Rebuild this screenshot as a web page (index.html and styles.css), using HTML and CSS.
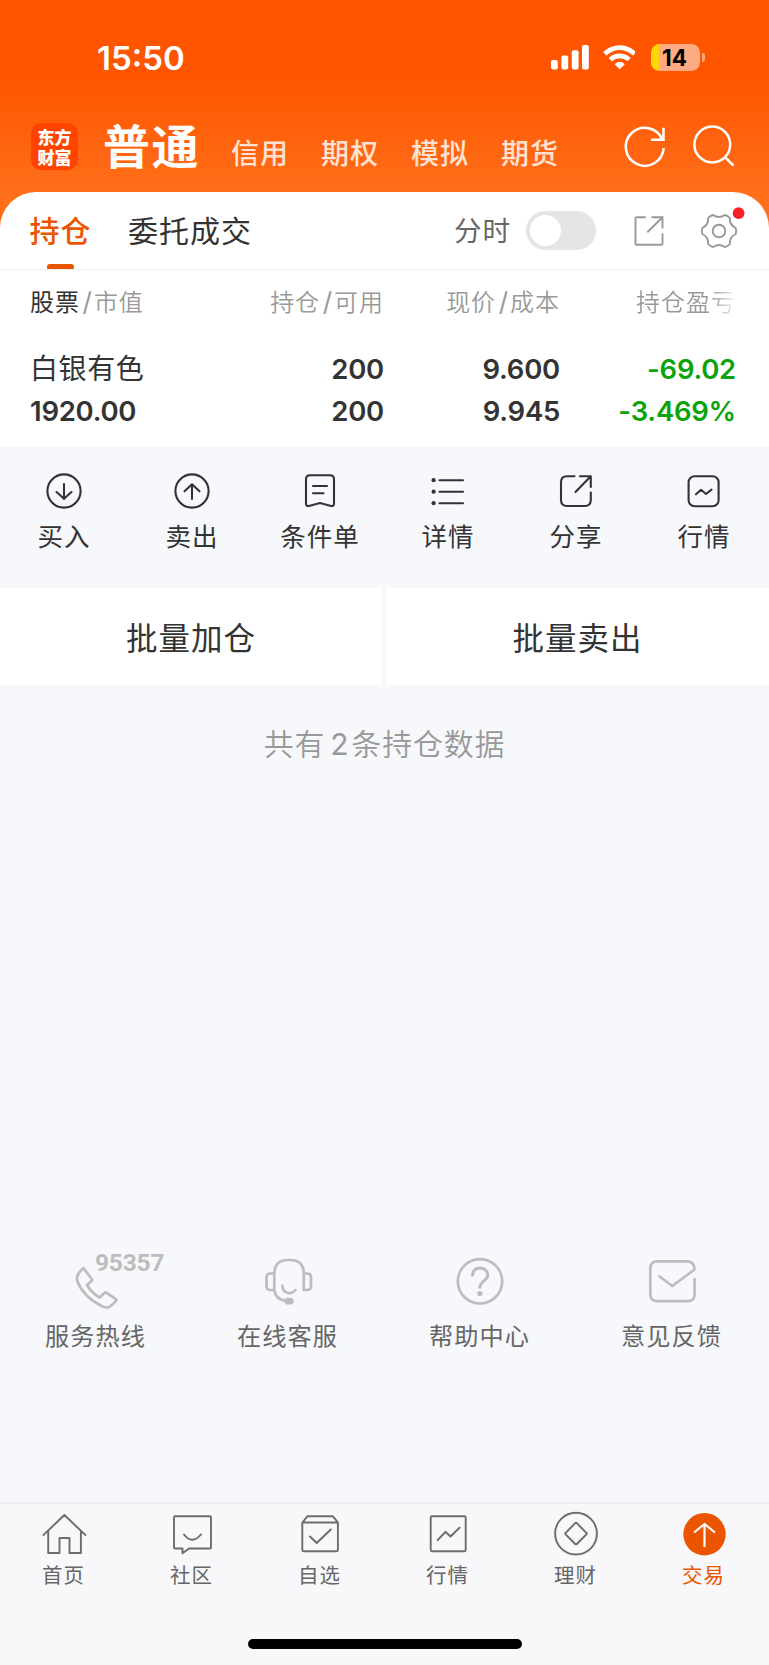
FILE: index.html
```html
<!DOCTYPE html>
<html lang="zh-CN">
<head>
<meta charset="utf-8">
<title>持仓</title>
<link rel="stylesheet" href="styles.css">
</head>
<body>
<div class="screen">
  <header class="top">
    <div class="status">
      <span class="clock">15:50</span>
      <svg class="signals" viewBox="545 40 90 34" width="90" height="34" fill="#fff">
        <rect x="551" y="60" width="6.8" height="9.4" rx="2"/><rect x="561.4" y="55.4" width="6.8" height="14" rx="2"/><rect x="571.8" y="50.3" width="6.8" height="19.1" rx="2"/><rect x="582" y="45" width="6.8" height="24.4" rx="2"/>
        <g fill="none" stroke="#fff" stroke-width="4.7"><path d="M604.8 53.8C613.3 45.5 626.100 45.500 634.600 53.800"/><path d="M610.300 59.600C615.700 54.500 623.700 54.500 629.100 59.600"/></g>
        <path d="M619.700 69.300L614.600 64.200Q619.700 59.400 624.800 64.200Z"/>
      </svg>
      <div class="battery"><span>14</span></div>
      <i class="nub"></i>
    </div>
    <div class="accounts">
      <div class="logo">东方<br>财富</div>
      <b class="current">普通</b>
      <nav class="others"><span>信用</span><span>期权</span><span>模拟</span><span>期货</span></nav>
      <svg class="top-icons" viewBox="620 122 120 50" width="120" height="50" fill="none" stroke="#fff" stroke-width="2.500">
        <path d="M663.700 148.200A19 19 0 1 1 662.300 139.500"/><path d="M663.500 127.800V139.700H651"/>
        <circle cx="712.300" cy="144.500" r="17.900"/><path d="M724.700 156.800L733.500 165.600"/>
      </svg>
    </div>
  </header>

  <main class="card">
    <div class="tabs">
      <span class="tab active">持仓</span>
      <span class="tab second">委托成交</span>
      <span class="mode">分时</span>
      <i class="toggle"></i>
      <svg class="tool-icons" viewBox="628 200 125 60" width="125" height="60" fill="none" stroke="#999" stroke-width="1.900">
        <path d="M645.700 217.300H636.500Q635.500 217.300 635.500 218.300V243.700Q635.500 244.700 636.500 244.700H661.500Q662.500 244.700 662.500 243.700V233.500"/><path d="M651.500 217.300H662.500V228.500M662 217.800L647.300 232.200"/>
        <g transform="translate(719 231)"><path stroke-linejoin="round" d="M16.700 3Q17.800 0 16.700 -3Q10.400 -6 10.900 -13Q8.900 -15.400 5.800 -16Q0 -12 -5.800 -16Q-8.900 -15.400 -10.900 -13Q-10.400 -6 -16.700 -3Q-17.800 0 -16.700 3Q-10.400 6 -10.900 13Q-8.900 15.400 -5.800 16Q0 12 5.800 16Q8.900 15.400 10.900 13Q10.400 6 16.700 3Z"/><circle r="6.300"/></g>
        <circle cx="738.600" cy="213.200" r="5.900" fill="#fa1f25" stroke="none"/>
      </svg>
    </div>
    <div class="grid heads">
      <span><em>股票</em><s>/</s>市值</span><span>持仓<s>/</s>可用</span><span>现价<s>/</s>成本</span><span class="fade">持仓盈亏</span>
    </div>
    <div class="grid row first"><span class="name">白银有色</span><span>200</span><span>9.600</span><span class="loss">-69.02</span></div>
    <div class="grid row"><span>1920.00</span><span>200</span><span>9.945</span><span class="loss">-3.469%</span></div>
  </main>

  <section class="actions">
    <div><svg viewBox="44 471 40 40"><circle cx="64" cy="491" r="16.600"/><path d="M64 484V499M56.500 492L64 498.700L71.500 492"/></svg><span>买入</span></div>
    <div><svg viewBox="172 471 40 40"><circle cx="192" cy="491" r="16.600"/><path d="M192 499V484.300M184.500 491.300L192 484.300L199.500 491.300"/></svg><span>卖出</span></div>
    <div><svg viewBox="300 471 40 40"><path d="M310 475.300H330Q334 475.300 334 479.300V503.500Q334 506.500 331 505.900L320 503L309 505.900Q306 506.500 306 503.500V479.300Q306 475.300 310 475.300ZM313 486H327M313 493.300H323.500"/></svg><span>条件单</span></div>
    <div><svg viewBox="428 471 40 40"><path d="M439.500 480.200H463M439.500 491.700H463M439.500 503.200H463"/><g fill="#333" stroke="none"><circle cx="433.600" cy="480.200" r="2.100"/><circle cx="433.600" cy="491.700" r="2.100"/><circle cx="433.600" cy="503.200" r="2.100"/></g></svg><span>详情</span></div>
    <div><svg viewBox="556 471 40 40"><path d="M574.500 476.300H567Q561 476.300 561 482.300V500Q561 506 567 506H584.800Q590.800 506 590.800 500V492.500M580 476.300H590.800V487M590.300 476.800L575.500 492"/></svg><span>分享</span></div>
    <div><svg viewBox="684 471 40 40"><rect x="688.600" y="476.200" width="30" height="30" rx="6"/><path d="M696 494.200L701 489.800L706 494L711.500 489.700"/></svg><span>行情</span></div>
  </section>

  <section class="batch"><div>批量加仓</div><div>批量卖出</div></section>
  <p class="count">共有<span>2</span>条持仓数据</p>

  <section class="services">
    <div><svg viewBox="66 1251 60 60"><path d="M83.500 1268L92 1279.500Q92.300 1280.200 91.700 1280.800L87 1285Q91 1292.500 99.700 1297.500L104.700 1292.800Q105.500 1292 106.400 1292.600L115.800 1299.200Q117 1300 115.800 1301.200Q111.500 1306 108.500 1307.300Q106 1308 102.500 1306.500Q83.500 1297 77.500 1281.500Q76.300 1278 77.800 1275Q80 1271 83.500 1268Z"/></svg><i class="hotline">95357</i><span>服务热线</span></div>
    <div><svg viewBox="258 1251 60 60"><path d="M274.300 1290V1274Q274.300 1260 288 1260H290Q303.800 1260 303.800 1274V1290H307Q311 1290 311 1286V1277.500Q311 1273.500 307 1273.500H304M274.300 1273.500H270.500Q266.500 1273.500 266.500 1277.500V1286Q266.500 1290 270.500 1290H274.300Q275.500 1299.500 286 1301M282.500 1285.500C282.500 1293.500 291 1295.500 295.500 1290"/><rect x="285.800" y="1299" width="6.500" height="4.200" rx="2" fill="#bdbdbd"/></svg><span>在线客服</span></div>
    <div><svg viewBox="450 1251 60 60"><circle cx="480" cy="1281.300" r="22.200"/><path stroke-width="3" stroke-linecap="butt" d="M472.500 1276.500C472.500 1270.500 475.500 1268 480 1268S487.700 1271 487.700 1275C487.700 1281 479.700 1281 479.700 1288.500"/><circle cx="479.900" cy="1293.500" r="2.600" fill="#bdbdbd" stroke="none"/></svg><span>帮助中心</span></div>
    <div><svg viewBox="642 1251 60 60"><path d="M694.600 1279V1294Q694.600 1301.200 687.500 1301.200H657.500Q650.300 1301.200 650.300 1294V1268.500Q650.300 1261.300 657.500 1261.300H687Q694.600 1261.300 694.600 1269.500L672.300 1286L659.500 1276.500"/></svg><span>意见反馈</span></div>
  </section>

  <footer class="bottom">
    <nav class="bar">
      <div><svg viewBox="40 1509 48 48"><path stroke-linecap="butt" d="M42.800 1535.600L64.400 1515L86 1535.600M48.200 1531V1553H59.500V1538H69.500V1553H80.900V1531"/></svg><span>首页</span></div>
      <div><svg viewBox="168 1509 48 48"><path d="M175 1516.300H210Q211 1516.300 211 1517.300V1547.500Q211 1548.500 210 1548.500H189L182.500 1553.300V1548.500H175Q174 1548.500 174 1547.500V1517.300Q174 1516.300 175 1516.300ZM184 1534.500Q192 1545 201 1534.500"/></svg><span>社区</span></div>
      <div><svg viewBox="296 1509 48 48"><path d="M302.500 1522.500L307.300 1516.300H333L337.900 1522.500M302.300 1522.500H337.900V1549.500Q337.900 1551.300 336.100 1551.300H304.100Q302.300 1551.300 302.300 1549.500ZM310 1536.500L316.700 1543L330.800 1529.500"/></svg><span>自选</span></div>
      <div><svg viewBox="424 1509 48 48"><rect x="430.700" y="1516.300" width="35" height="35" rx="1.200"/><path d="M437.700 1540L445.500 1531.800L450.500 1536.500L459.500 1527.700"/></svg><span>行情</span></div>
      <div><svg viewBox="552 1509 48 48"><circle cx="576" cy="1533.600" r="20.900"/><path d="M575.200 1523.200Q576 1522.400 576.800 1523.200L586.400 1532.800Q587.200 1533.600 586.400 1534.400L576.800 1544Q576 1544.800 575.200 1544L565.600 1534.400Q564.800 1533.600 565.600 1532.800Z"/></svg><span>理财</span></div>
      <div class="on"><svg viewBox="680 1509 48 48"><circle cx="704.500" cy="1534.200" r="21.200" fill="#eb5500" stroke="none"/><path stroke="#fff" stroke-width="2.200" stroke-linecap="butt" d="M704.500 1524V1547M694 1532.500L704.500 1524L715 1532.500"/></svg><span>交易</span></div>
    </nav>
    <i class="home"></i>
  </footer>
</div>
</body>
</html>
```

FILE: styles.css
```css
* { box-sizing: border-box; }
body { margin: 0; }
i, em { font-style: normal; }
s { text-decoration: none; }
svg { display: block; flex: none; }
span { white-space: nowrap; }
.screen {
  width: 769px; height: 1665px; overflow: hidden;
  display: flex; flex-direction: column;
  background: #f7f8fb; color: #333;
  font-family: "Noto Sans CJK SC", sans-serif;
}

/* header */
.top {
  height: 242px; flex: none;
  background: linear-gradient(#ff5500 0, #ff5500 75px, #ff6e19 192px);
}
.status { height: 114px; padding-top: 40px; display: flex; align-items: flex-start; }
.clock {
  width: 448px; margin-left: 97px; height: 34px;
  font: 600 33px/36px Inter, sans-serif; color: #fff;
}
.battery {
  width: 49px; height: 27px; margin: 4px 0 0 16px; border-radius: 8.5px;
  background: linear-gradient(90deg, #ffd60a 7.5px, #ffaa82 7.5px);
  font: 700 22.500px/27px Inter, sans-serif; color: #000; text-align: center; padding-right: 2px;
}
.nub { width: 3px; height: 9px; margin: 13px 0 0 1.500px; border-radius: 0 4px 4px 0; background: #ffaa82; }
.accounts { height: 78px; display: flex; align-items: flex-start; padding-left: 31px; }
.logo {
  width: 47px; height: 47px; margin-top: 9px; border-radius: 10px; background: #ff4400;
  padding-top: 4px; text-align: center;
  color: #fff; font-weight: 900; font-size: 17px; line-height: 19.500px;
}
.current {
  width: 127px; margin-left: 25px; padding-top: 2px; white-space: nowrap;
  font-weight: 700; font-size: 47px; line-height: 56px; letter-spacing: 1.500px; color: #fff;
}
.others { display: grid; grid-template-columns: repeat(4, 90px); padding: 18px 0 0 1px; width: 390px;
  font-weight: 500; font-size: 28px; line-height: 41px; letter-spacing: 1px; color: #ffe2d2; }
.top-icons { margin: 8px 0 0; }

/* holdings */
.card { height: 255px; flex: none; margin-top: -50px; background: #fff; border-radius: 36px 36px 0 0; }
.tabs { height: 78px; border-bottom: 1px solid #eee; display: flex; align-items: flex-start; }
.tab { font-size: 30px; line-height: 44px; letter-spacing: 1px; margin-top: 15px; }
.tab.active {
  width: 61px; margin-left: 30px; color: #eb5500; font-weight: 500; height: 62px;
  display: flex; flex-direction: column; align-items: center;
}
.tab.active::after { content: ""; width: 27px; height: 5px; margin-top: 13px; border-radius: 3px 3px 1px 1px; background: #eb5500; }
.tab.second { width: 325px; margin-left: 37px; }
.mode { width: 72px; margin-left: 1px; font-size: 27.500px; line-height: 44px; margin-top: 15px; letter-spacing: 1px; color: #666; }
.toggle { width: 70px; height: 39px; margin-top: 19px; padding: 4px; border-radius: 20px; background: #e5e5e7; }
.toggle::after { content: ""; display: block; width: 31px; height: 31px; border-radius: 50%; background: #fff; }
.tool-icons { margin: 8px 0 0 32px; }
.grid { display: grid; grid-template-columns: 200px 154px 176px 176px; margin-left: 30px; }
.grid span:not(:first-child) { text-align: right; }
.heads { height: 74px; padding-top: 13px; font-size: 24px; line-height: 35px; letter-spacing: 1px; color: #999; font-weight: 350; }
.heads em { color: #333; font-weight: 400; }
.heads s { font: 400 26px/30px Inter, sans-serif; margin: 0 1.500px 0 2.500px; letter-spacing: .5px; }
.heads .fade { -webkit-mask-image: linear-gradient(90deg, #000 150px, transparent 179px); mask-image: linear-gradient(90deg, #000 150px, transparent 179px); }
.row { height: 42px; font: 600 27.500px/50px Inter, sans-serif; letter-spacing: -.25px; }
.row .name { font: 400 28px/47px "Noto Sans CJK SC", sans-serif; letter-spacing: .6px; }
.row .loss { color: #0ba30b; }

/* per-stock actions */
.actions { height: 141px; flex: none; display: grid; grid-template-columns: repeat(6, 128px); padding-top: 24px; }
.actions > div { display: flex; flex-direction: column; align-items: center; }
.actions svg { width: 40px; height: 40px; fill: none; stroke: #333; stroke-width: 2.100; stroke-linecap: round; stroke-linejoin: round; }
.actions span { font-size: 25.500px; line-height: 37px; margin: 5px 0 0; letter-spacing: 1px; }
.batch { height: 97px; flex: none; display: grid; grid-template-columns: 382px 383px; gap: 4px; }
.batch div { background: #fff; text-align: center; font-size: 31.500px; line-height: 96px; letter-spacing: 1px; }
.count { margin: 0; height: 566px; padding-top: 34px; text-align: center; font-size: 30px; line-height: 46px; letter-spacing: .8px; color: #999; font-weight: 350; }
.count span { font-family: Inter, sans-serif; font-size: 30px; font-weight: 400; margin: 0 2px 0 5px; }

/* help entries */
.services { flex: none; height: 251px; display: grid; grid-template-columns: repeat(4, 192px); }
.services > div { display: flex; flex-direction: column; align-items: center; position: relative; }
.services svg { width: 60px; height: 60px; fill: none; stroke: #bdbdbd; stroke-width: 2.700; stroke-linecap: round; stroke-linejoin: round; }
.hotline { position: absolute; left: 95px; top: 0; font: 700 24.500px/24px Roboto, sans-serif; letter-spacing: -.2px; color: #bdbdbd; }
.services span { font-size: 24.200px; line-height: 36px; margin: 6px 1px 0 0; letter-spacing: 1px; color: #666; }

/* tab bar */
.bottom { flex: none; height: 163px; border-top: 2px solid #ebecee; background: #f8f8fb; display: flex; flex-direction: column; align-items: center; }
.bar { width: 769px; height: 135px; padding-top: 5px; display: grid; grid-template-columns: repeat(6, 128px); }
.bar > div { display: flex; flex-direction: column; align-items: center; }
.bar svg { width: 48px; height: 48px; fill: none; stroke: #6c6c6c; stroke-width: 1.900; stroke-linecap: round; stroke-linejoin: round; }
.bar span { font-size: 20.500px; line-height: 30px; margin: 2px 1px 0 0; letter-spacing: 1px; color: #666; }
.bar .on span { color: #eb5500; }
.home { width: 274px; height: 10px; border-radius: 5px; background: #000; }
```
